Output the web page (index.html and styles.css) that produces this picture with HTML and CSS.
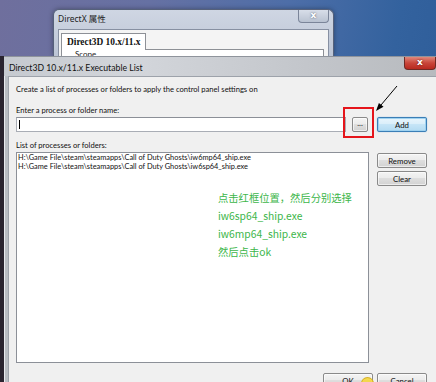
FILE: index.html
```html
<!DOCTYPE html>
<html>
<head>
<meta charset="utf-8">
<link rel="stylesheet" href="styles.css">
</head>
<body>
<div class="desktop">
  <div class="bgwin">
    <div class="bg-title">
      <span class="bg-title-text">DirectX 属性</span>
      <span class="bg-close">x</span>
    </div>
    <div class="bg-body">
      <div class="bg-tab">Direct3D 10.x/11.x</div>
      <div class="bg-panel"><span class="scope">Scope</span></div>
    </div>
  </div>

  <div class="dialog">
    <div class="dlg-title">
      <span class="dlg-title-text">Direct3D 10.x/11.x Executable List</span>
      <span class="dlg-close">x</span>
    </div>
    <div class="dlg-body">
      <div class="client">
        <p class="desc">Create a list of processes or folders to apply the control panel settings on</p>
        <p class="lbl lbl-first">Enter a process or folder name:</p>
        <div class="row-input">
          <div class="textbox"><span class="caret"></span></div>
          <span class="btn btn-browse">...</span>
          <span class="btn btn-default">Add</span>
        </div>
        <p class="lbl lbl-second">List of processes or folders:</p>
        <div class="row-list">
          <div class="listbox">
            <div class="item">H:\Game File\steam\steamapps\Call of Duty Ghosts\iw6mp64_ship.exe</div>
            <div class="item">H:\Game File\steam\steamapps\Call of Duty Ghosts\iw6sp64_ship.exe</div>
          </div>
          <div class="side">
            <span class="btn">Remove</span>
            <span class="btn">Clear</span>
          </div>
        </div>
        <div class="row-foot">
          <span class="btn">OK</span>
          <span class="btn">Cancel</span>
        </div>
      </div>
    </div>
  </div>

  <div class="redbox"></div>
  <svg class="arrow" width="436" height="382" viewBox="0 0 436 382">
    <line x1="397" y1="86" x2="381" y2="105" stroke="#000" stroke-width="1"/>
    <polygon points="376,111 383.5,106.8 378.9,103" fill="#000"/>
  </svg>
  <div class="note">
    <div>点击红框位置，然后分别选择</div>
    <div>iw6sp64_ship.exe</div>
    <div>iw6mp64_ship.exe</div>
    <div>然后点击ok</div>
  </div>
  <div class="cursor"></div>
</div>
</body>
</html>
```

FILE: styles.css
```css
* { box-sizing: border-box; }
body {
  margin: 0;
  width: 436px;
  height: 382px;
  overflow: hidden;
  font-family: "Lato", "Noto Sans", sans-serif;
}
p { margin: 0; }

.desktop {
  position: relative;
  width: 436px;
  height: 382px;
  overflow: hidden;
  background: linear-gradient(100deg, #6f6f9d 0%, #6671a3 30%, #4d6ea8 58%, #33629e 80%, #2c5b97 100%);
}

/* background window */
.bgwin {
  position: absolute;
  left: 53px;
  top: 9px;
  width: 281px;
  height: 47px;
  overflow: hidden;
  border: 1px solid #56617a;
  border-bottom: none;
  border-radius: 6px 6px 0 0;
  background: linear-gradient(#cfd6e3, #bcc5d5);
  box-shadow: 0 0 5px rgba(0, 0, 0, 0.35);
  display: flex;
  flex-direction: column;
}
.bg-title {
  height: 19px;
  flex: none;
  display: flex;
  justify-content: space-between;
  align-items: flex-start;
  padding: 0 4px 0 4px;
}
.bg-title-text {
  font-family: "Noto Sans", "Noto Sans CJK SC", sans-serif;
  font-size: 8.5px;
  line-height: 18px;
  color: #1e1e1e;
}
.bg-close {
  width: 31px;
  height: 13px;
  border: 1px solid #7b8599;
  border-top: none;
  border-radius: 0 0 4px 4px;
  background: linear-gradient(#d8dee9, #b9c2d1);
  color: #fff;
  font-family: "DejaVu Sans", sans-serif;
  font-weight: bold;
  font-size: 9px;
  line-height: 11px;
  text-align: center;
  text-shadow: 0 0 2px #4a5468;
}
.bg-body {
  flex: 1;
  margin: 0 4px;
  border: 1px solid #8790a2;
  border-bottom: none;
  background: #f4f4f4;
  padding: 3px 4px 0 2px;
}
.bg-tab {
  width: 85px;
  height: 17px;
  border: 1px solid #8d9096;
  border-bottom: none;
  background: #fff;
  font-family: "Liberation Serif", serif;
  font-weight: bold;
  font-size: 9.4px;
  line-height: 16px;
  padding-left: 5px;
  color: #111;
  position: relative;
  z-index: 1;
}
.bg-panel {
  margin-top: -1px;
  height: 40px;
  border: 1px solid #8d9096;
  background: #fff;
  padding-left: 13px;
}
.scope {
  display: block;
  font-size: 8px;
  line-height: 9px;
  color: #222;
}

/* main dialog */
.dialog {
  position: absolute;
  left: 0;
  top: 56px;
  width: 436px;
  height: 326px;
  border-left: 4px solid #2a2430;
  display: flex;
  flex-direction: column;
  background: #b9bdc3;
}
.dlg-title {
  height: 20px;
  flex: none;
  display: flex;
  justify-content: space-between;
  align-items: flex-start;
  padding-left: 5px;
  background: linear-gradient(90deg, #c5c9cf 0%, #d3d6db 30%, #c3c6cb 70%, #b7babe 100%);
  border-top: 1px solid #8f949c;
}
.dlg-title-text {
  font-size: 8.7px;
  line-height: 21px;
  color: #111;
}
.dlg-close {
  width: 32px;
  height: 13px;
  border: 1px solid #6e2a25;
  border-top: none;
  border-radius: 0 0 4px 4px;
  background: linear-gradient(#e0877a, #c9463a 50%, #b8291f);
  color: #fff;
  font-family: "DejaVu Sans", sans-serif;
  font-weight: bold;
  font-size: 9px;
  line-height: 11px;
  text-align: center;
  text-shadow: 0 0 2px #5a0f0a;
}
.dlg-body {
  flex: 1;
  display: flex;
  padding-left: 3px;
  border-left: 1px solid #e8eaee;
}
.client {
  flex: 1;
  background: #f0f0f0;
  border-left: 1px solid #9da2aa;
  border-top: 1px solid #9da2aa;
  padding: 6px 9px 0 7px;
  display: flex;
  flex-direction: column;
  font-size: 7.6px;
  color: #111;
}
.desc { line-height: 12px; }
.lbl { line-height: 12px; }
.lbl-first { margin-top: 9px; }
.lbl-second { margin-top: 7px; }

.row-input {
  display: flex;
  align-items: center;
  height: 15px;
  margin-top: 1px;
}
.textbox {
  width: 330px;
  height: 15px;
  background: #fff;
  border: 1px solid #a9adb5;
  border-top-color: #8b8f97;
  position: relative;
}
.caret {
  position: absolute;
  left: 2px;
  top: 2px;
  width: 1px;
  height: 9px;
  background: #000;
}
.btn {
  display: flex;
  align-items: center;
  justify-content: center;
  width: 50px;
  height: 15px;
  border: 1px solid #8a8a8a;
  border-radius: 2px;
  background: linear-gradient(#f4f4f4 0%, #ececec 45%, #dedede 50%, #d2d2d2 100%);
  box-shadow: inset 0 0 0 1px rgba(255, 255, 255, 0.6);
  font-size: 7.8px;
  color: #111;
}
.btn-browse {
  width: 16px;
  margin-left: 6px;
  line-height: 1;
  align-items: flex-end;
  padding-bottom: 3px;
}
.btn-default {
  margin-left: 9px;
  border-color: #3b7eb6;
  background: linear-gradient(#e9f5fc 0%, #d9eefa 50%, #c6e5f7 50%, #b3dbf2 100%);
  box-shadow: inset 0 0 0 1px #9fd2f0, 0 0 1px #5aa7dc;
}

.row-list {
  display: flex;
  margin-top: 1px;
}
.listbox {
  width: 353px;
  height: 211px;
  background: #fff;
  border: 1px solid #8c9098;
  padding: 0 1px;
}
.item {
  font-size: 7.4px;
  line-height: 9px;
  white-space: nowrap;
  color: #111;
}
.side {
  margin-left: 8px;
  padding-top: 1px;
  display: flex;
  flex-direction: column;
  gap: 3px;
}
.row-foot {
  display: flex;
  justify-content: flex-end;
  gap: 4px;
  margin-top: 10px;
}

/* overlays */
.redbox {
  position: absolute;
  left: 343px;
  top: 107px;
  width: 31px;
  height: 31px;
  border: 2px solid #e5151b;
}
.arrow {
  position: absolute;
  left: 0;
  top: 0;
  pointer-events: none;
}
.note {
  position: absolute;
  left: 218px;
  top: 189px;
  font-family: "Noto Sans CJK SC", sans-serif;
  font-size: 10.3px;
  line-height: 18px;
  color: #3cb64a;
}
.cursor {
  position: absolute;
  left: 361px;
  top: 377px;
  width: 13px;
  height: 13px;
  border-radius: 50%;
  background: rgba(247, 214, 52, 0.85);
  border: 1px solid rgba(200, 160, 20, 0.7);
}
```
